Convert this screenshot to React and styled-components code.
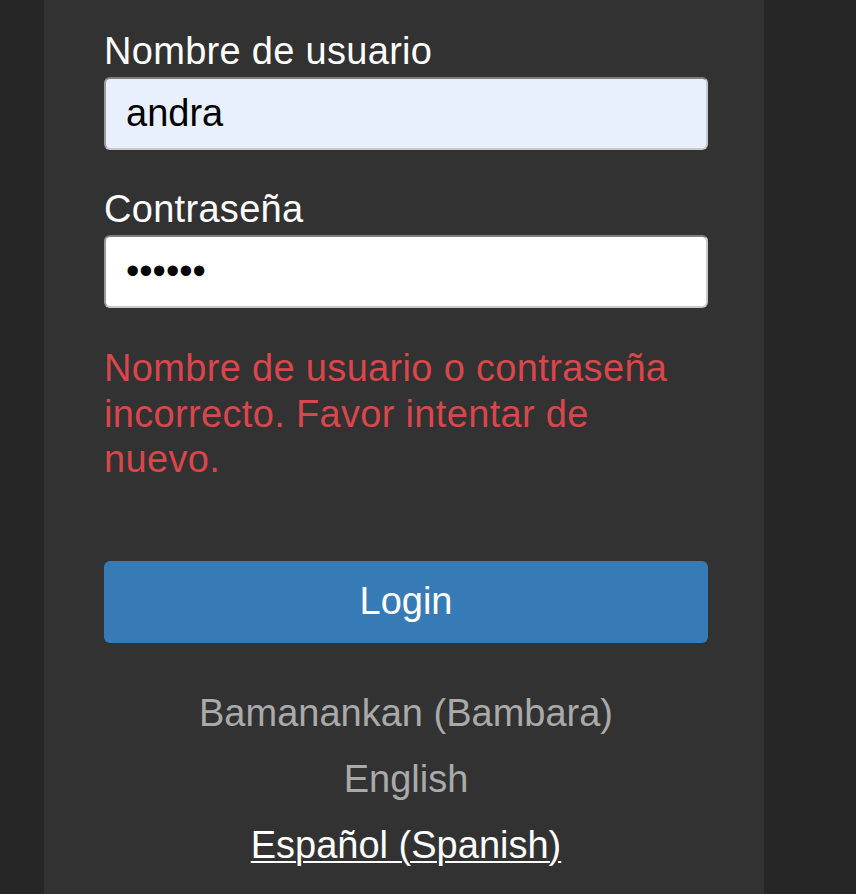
import React from 'react';
import styled, { createGlobalStyle } from 'styled-components';

const GlobalStyle = createGlobalStyle`
    html, body {
        margin: 0;
        padding: 0;
        background: #262626;
    }
    body {
        font-family: "Liberation Sans", Arial, Helvetica, sans-serif;
    }
`;

const Page = styled.div`
    display: flex;
    min-height: 100vh;
`;

const Panel = styled.main`
    box-sizing: border-box;
    width: 720px;
    margin-left: 44px;
    min-height: 100vh;
    background: #323232;
    padding: 29px 56px 0 60px;
`;

const Form = styled.form`
    display: flex;
    flex-direction: column;
`;

const Field = styled.div`
    display: flex;
    flex-direction: column;
    gap: 3px;
    margin-top: ${props => props.$first ? '0' : '37px'};
`;

const Label = styled.label`
    font-size: 38px;
    line-height: 45px;
    letter-spacing: 0.3px;
    color: #ffffff;
`;

const Input = styled.input`
    box-sizing: border-box;
    width: 100%;
    height: 73px;
    padding: 0 20px;
    font-family: inherit;
    font-size: 38px;
    color: #000;
    background: ${props => props.$autofill ? '#e8f0fe' : '#ffffff'};
    border: 2px solid;
    border-color: #7f7f7f #c9c9c9 #c9c9c9 #9a9a9a;
    border-radius: 6px;
    outline: none;
`;

const ErrorText = styled.p`
    margin: 38px 0 0;
    max-width: 585px;
    font-size: 38px;
    line-height: 45.5px;
    letter-spacing: 0.33px;
    color: #d9464c;
`;

const LoginButton = styled.button`
    height: 82px;
    margin-top: 78px;
    border: none;
    border-radius: 6px;
    background: #367bb6;
    color: #ffffff;
    font-family: inherit;
    font-size: 38px;
    cursor: pointer;
`;

const Languages = styled.ul`
    list-style: none;
    margin: 37px 0 0;
    padding: 0;
    text-align: center;
`;

const Language = styled.li`
    font-size: 38px;
    line-height: 66px;
    color: ${props => props.$active ? '#ffffff' : '#aaaaaa'};
    text-decoration: ${props => props.$active ? 'underline' : 'none'};
    text-underline-offset: 3px;
    text-decoration-thickness: 2px;
`;

const App = () => {
    return (
        <Page>
            <GlobalStyle />
            <Panel>
                <Form onSubmit={e => e.preventDefault()}>
                    <Field $first>
                        <Label htmlFor="username">Nombre de usuario</Label>
                        <Input id="username" $autofill defaultValue="andra" />
                    </Field>
                    <Field>
                        <Label htmlFor="password">Contraseña</Label>
                        <Input id="password" type="password" defaultValue="andra1" />
                    </Field>
                    <ErrorText>
                        Nombre de usuario o contraseña incorrecto. Favor intentar de nuevo.
                    </ErrorText>
                    <LoginButton type="submit">Login</LoginButton>
                    <Languages>
                        <Language>Bamanankan (Bambara)</Language>
                        <Language>English</Language>
                        <Language $active>Español (Spanish)</Language>
                    </Languages>
                </Form>
            </Panel>
        </Page>
    );
};

export default App;
